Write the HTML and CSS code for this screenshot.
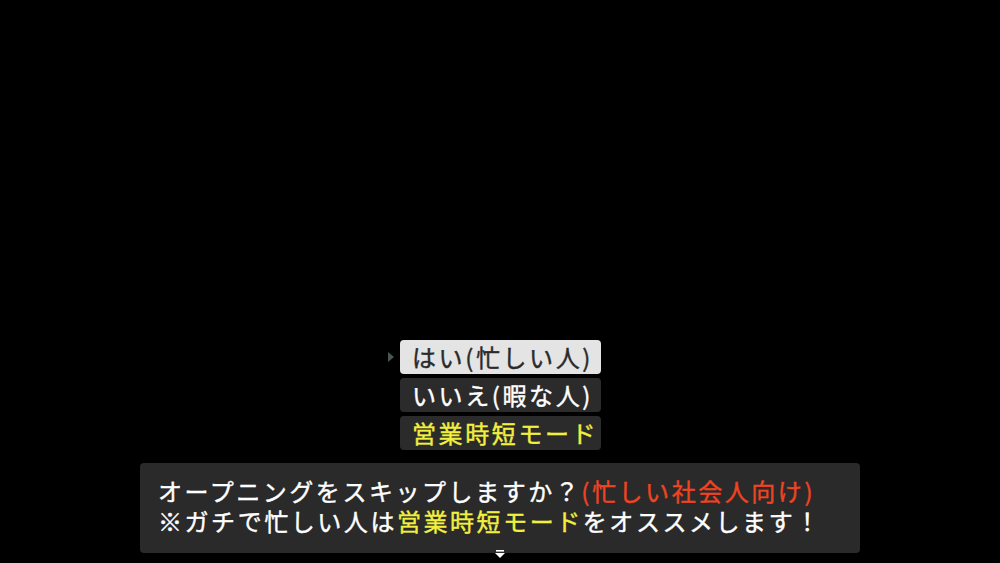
FILE: index.html
```html
<!DOCTYPE html>
<html lang="ja">
<head>
<meta charset="utf-8">
<link rel="stylesheet" href="styles.css">
</head>
<body>
<div class="screen">
  <div class="choices">
    <div class="choice selected"><span class="cursor"></span>はい(忙しい人)</div>
    <div class="choice">いいえ(暇な人)</div>
    <div class="choice yellow">営業時短モード</div>
  </div>
  <div class="dialog">
    <p class="line">オープニングをスキップしますか？<span class="red">(忙しい社会人向け)</span></p>
    <p class="line">※ガチで忙しい人は<span class="yellow">営業時短モード</span>をオススメします！</p>
    <svg class="next" width="12" height="10" viewBox="0 0 12 10"><rect x="2" y="0" width="8" height="1.6" fill="#fff"/><polygon points="1,3 11,3 6,8" fill="#fff"/></svg>
  </div>
</div>
</body>
</html>
```
FILE: styles.css
```css
html, body {
  margin: 0;
  padding: 0;
  background: #000;
}
.screen {
  width: 1000px;
  height: 563px;
  display: flex;
  flex-direction: column;
  justify-content: flex-end;
  align-items: center;
  box-sizing: border-box;
  padding-bottom: 10px;
  font-family: "Noto Sans CJK JP", "Noto Sans", sans-serif;
  font-weight: 400;
  -webkit-text-stroke: 0.4px currentColor;
  color: #fff;
}
.choices {
  display: flex;
  flex-direction: column;
  gap: 4px;
  margin-bottom: 13px;
  margin-left: 1px;
}
.choice {
  position: relative;
  width: 201px;
  height: 34px;
  box-sizing: border-box;
  padding-left: 12px;
  background: #2b2b2b;
  border-radius: 4px;
  font-size: 24px;
  line-height: 34px;
  letter-spacing: 2.6px;
  color: #fff;
  white-space: nowrap;
}
.choice.selected {
  background: #e4e4e4;
  color: #2a2a2a;
}
.choice.yellow, .yellow {
  color: #f2f03e;
}
.cursor {
  position: absolute;
  left: -12px;
  top: 12px;
  width: 0;
  height: 0;
  border-top: 5px solid transparent;
  border-bottom: 5px solid transparent;
  border-left: 6px solid #4a5555;
}
.dialog {
  position: relative;
  width: 720px;
  height: 90px;
  box-sizing: border-box;
  padding: 13px 0 0 18px;
  background: #2a2a2a;
  border-radius: 4px;
}
.line {
  margin: 0;
  height: 30px;
  font-size: 24px;
  line-height: 30px;
  letter-spacing: 2.55px;
  white-space: nowrap;
}
.red {
  color: #ee4422;
}
.next {
  position: absolute;
  left: 354px;
  bottom: -7px;
}
```
